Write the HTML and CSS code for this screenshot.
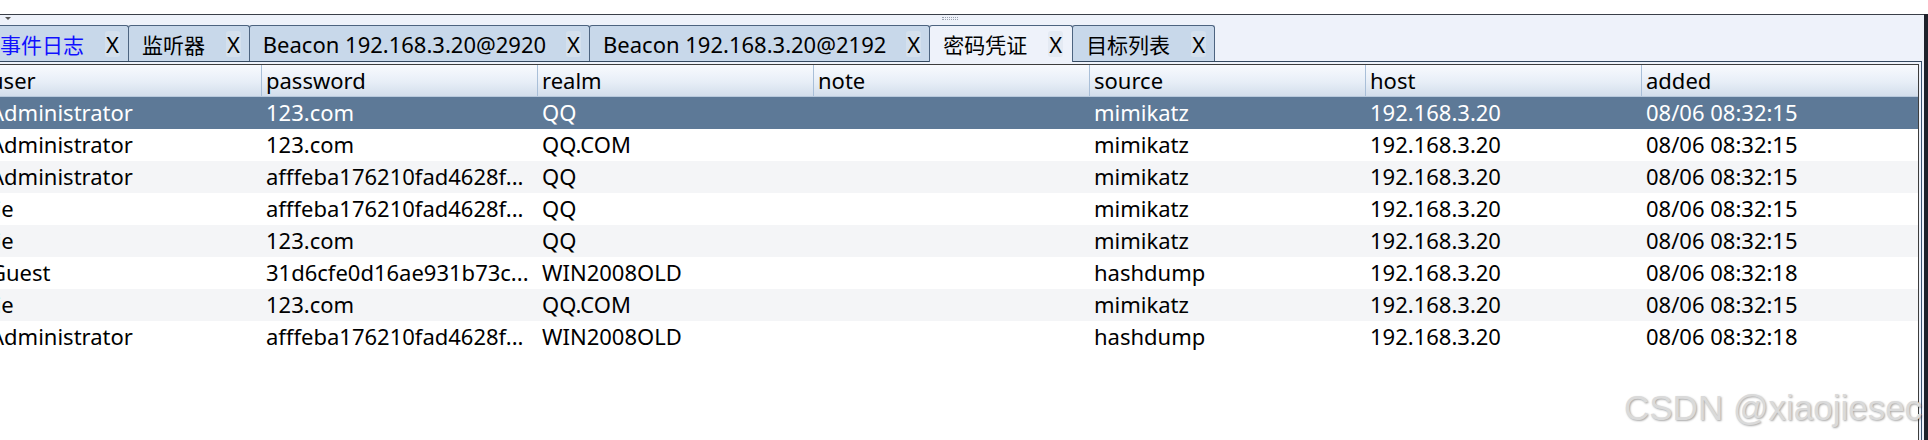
FILE: index.html
```html
<!DOCTYPE html>
<html lang="zh-CN">
<head>
  <meta charset="UTF-8">
  <title>密码凭证</title>
  <link rel="stylesheet" href="styles.css">
</head>
<body>
  <div class="main">
    <div class="top-gap"></div>
    <div class="pane">
      <div class="grip-row">
        <span class="menu-arrow"></span>
        <span class="grip"></span>
      </div>

      <div class="tabs">
        <div class="tab tab-alert"><span class="label cjk">事件日志</span><span class="close">X</span></div>
        <div class="tab"><span class="label cjk">监听器</span><span class="close">X</span></div>
        <div class="tab"><span class="label">Beacon 192.168.3.20@2920</span><span class="close">X</span></div>
        <div class="tab"><span class="label">Beacon 192.168.3.20@2192</span><span class="close">X</span></div>
        <div class="tab active"><span class="label cjk">密码凭证</span><span class="close">X</span></div>
        <div class="tab"><span class="label cjk">目标列表</span><span class="close">X</span></div>
      </div>

      <div class="content">
        <div class="table">
          <div class="row head">
            <div class="cell">user</div>
            <div class="cell">password</div>
            <div class="cell">realm</div>
            <div class="cell">note</div>
            <div class="cell">source</div>
            <div class="cell">host</div>
            <div class="cell">added</div>
          </div>
          <div class="row selected">
            <div class="cell">Administrator</div><div class="cell">123.com</div><div class="cell">QQ</div><div class="cell"></div>
            <div class="cell">mimikatz</div><div class="cell">192.168.3.20</div><div class="cell">08/06 08:32:15</div>
          </div>
          <div class="row">
            <div class="cell">Administrator</div><div class="cell">123.com</div><div class="cell">QQ.COM</div><div class="cell"></div>
            <div class="cell">mimikatz</div><div class="cell">192.168.3.20</div><div class="cell">08/06 08:32:15</div>
          </div>
          <div class="row alt">
            <div class="cell">Administrator</div><div class="cell">afffeba176210fad4628f...</div><div class="cell">QQ</div><div class="cell"></div>
            <div class="cell">mimikatz</div><div class="cell">192.168.3.20</div><div class="cell">08/06 08:32:15</div>
          </div>
          <div class="row">
            <div class="cell">jie</div><div class="cell">afffeba176210fad4628f...</div><div class="cell">QQ</div><div class="cell"></div>
            <div class="cell">mimikatz</div><div class="cell">192.168.3.20</div><div class="cell">08/06 08:32:15</div>
          </div>
          <div class="row alt">
            <div class="cell">jie</div><div class="cell">123.com</div><div class="cell">QQ</div><div class="cell"></div>
            <div class="cell">mimikatz</div><div class="cell">192.168.3.20</div><div class="cell">08/06 08:32:15</div>
          </div>
          <div class="row">
            <div class="cell">Guest</div><div class="cell">31d6cfe0d16ae931b73c...</div><div class="cell">WIN2008OLD</div><div class="cell"></div>
            <div class="cell">hashdump</div><div class="cell">192.168.3.20</div><div class="cell">08/06 08:32:18</div>
          </div>
          <div class="row alt">
            <div class="cell">jie</div><div class="cell">123.com</div><div class="cell">QQ.COM</div><div class="cell"></div>
            <div class="cell">mimikatz</div><div class="cell">192.168.3.20</div><div class="cell">08/06 08:32:15</div>
          </div>
          <div class="row">
            <div class="cell">Administrator</div><div class="cell">afffeba176210fad4628f...</div><div class="cell">WIN2008OLD</div><div class="cell"></div>
            <div class="cell">hashdump</div><div class="cell">192.168.3.20</div><div class="cell">08/06 08:32:18</div>
          </div>
        </div>
      </div>
    </div>

    <div class="watermark">CSDN @xiaojiesec</div>
  </div>
  <div class="edge"></div>
</body>
</html>
```

FILE: styles.css
```css
* {
  margin: 0;
  padding: 0;
  box-sizing: border-box;
}

body {
  width: 1928px;
  height: 440px;
  overflow: hidden;
  display: flex;
  background: #fff;
  font-family: "Noto Sans", "Noto Sans CJK SC", sans-serif;
  font-size: 22px;
  color: #000;
}

.main {
  position: relative;
  flex: 1;
  display: flex;
  flex-direction: column;
  overflow: hidden;
  padding-right: 2px;
  background: #eef2fa;
}

.top-gap {
  height: 14px;
  margin-right: -2px;
  background: #fff;
}

.pane {
  flex: 1;
  display: flex;
  flex-direction: column;
  border-top: 1px solid #3a3f48;
  margin-right: -2px;
  padding-right: 2px;
  background: #eef2fa;
}

/* little arrow + splitter grip above the tabs */
.grip-row {
  height: 10px;
  position: relative;
}

.menu-arrow {
  position: absolute;
  left: 5px;
  top: 2px;
  border-left: 3px solid transparent;
  border-right: 3px solid transparent;
  border-top: 3px solid #555;
}

.grip {
  position: absolute;
  left: 942px;
  top: 2px;
  width: 16px;
  height: 3px;
  border-top: 1px dotted #9aa2ae;
  border-bottom: 1px dotted #9aa2ae;
}

.tabs {
  display: flex;
  align-items: flex-end;
  height: 36px;
  margin-left: -14px;
  position: relative;
  z-index: 1;
}

.tab {
  display: flex;
  align-items: center;
  height: 36px;
  padding: 0 8px 0 13px;
  background: #c8d8ea;
  border: 1px solid #4d6480;
  border-bottom: none;
  border-radius: 3px 3px 0 0;
  margin-right: -1px;
  white-space: nowrap;
}

.tab .label {
  margin-right: 20px;
}

.tab .label.cjk {
  font-size: 21px;
  margin-right: 21px;
}

.tab-alert .label {
  color: #1010ff;
}

.tab .close {
  padding: 0 1px;
  line-height: 26px;
  background: #d4e0ed;
  border-radius: 3px;
}

.tab.active {
  background: #eef2fa;
  height: 37px;
  margin-bottom: -1px;
  padding-right: 9px;
}

.tab.active .close {
  background: #e4eaf3;
}

.content {
  flex: 1;
  border-top: 1px solid #34485f;
  border-right: 1px solid #3b5573;
  padding: 2px 2px 0 0;
  display: flex;
}

.table {
  flex: 1;
  overflow: hidden;
  border-top: 1px solid #3d3d3d;
  border-right: 1px solid #3d3d3d;
  background: #fff;
}

.row {
  display: grid;
  grid-template-columns: repeat(7, 276px);
  margin-left: -15px;
  height: 32px;
  line-height: 31px;
  background: #fff;
}

.row.alt {
  background: #f4f5f7;
}

.row.head {
  background: linear-gradient(#f8fafe, #e7eef7 55%, #d3deeb);
  border-bottom: 1px solid #b8c9dc;
}

.row.selected {
  background: #5d7997;
  color: #fff;
}

.cell {
  padding-left: 5px;
  white-space: nowrap;
  overflow: hidden;
}

.head .cell {
  padding-left: 4px;
  border-left: 1px solid #a9bfd8;
}

.watermark {
  position: absolute;
  left: 1624px;
  top: 390px;
  font-family: "Liberation Sans", Arial, sans-serif;
  font-size: 35px;
  line-height: 1;
  color: #dadada;
  text-shadow: 1px 1px 2px rgba(0, 0, 0, 0.35);
  white-space: nowrap;
}

.edge {
  width: 4px;
  margin-top: 14px;
  background: #1e222b;
}
```
